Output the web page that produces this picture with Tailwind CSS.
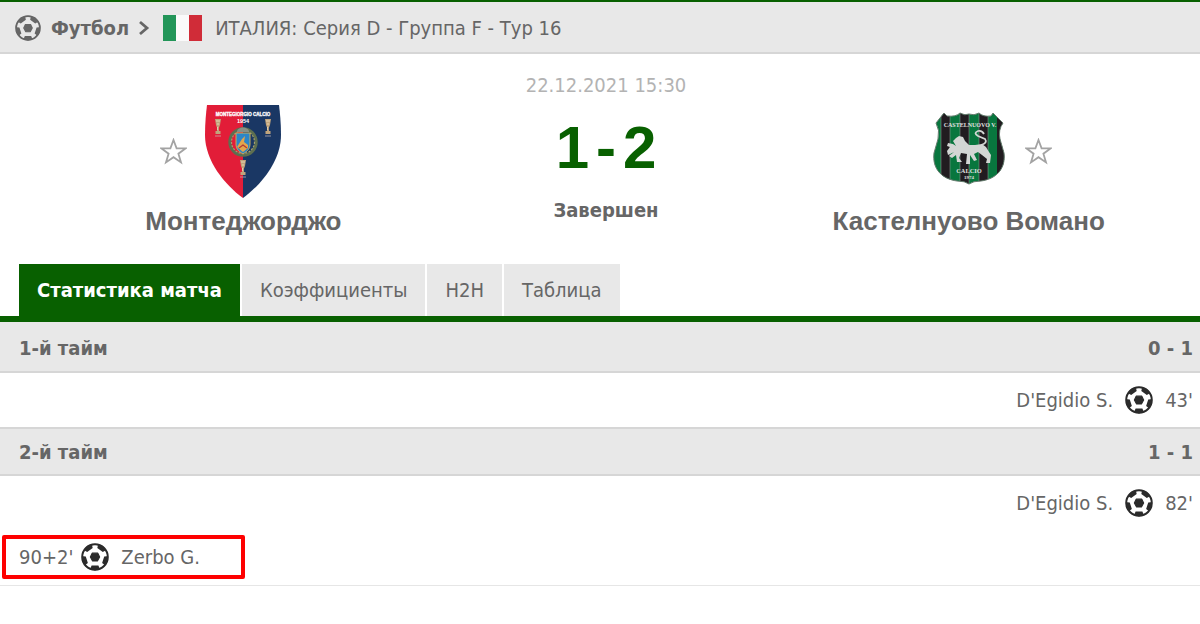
<!DOCTYPE html>
<html lang="ru">
<head>
<meta charset="utf-8">
<meta name="viewport" content="width=device-width, initial-scale=1">
<title>Монтеджорджо - Кастелнуово Вомано</title>
<script src="https://cdn.jsdelivr.net/npm/@tailwindcss/browser@4"></script>
</head>
<body class="bg-white font-['DejaVu_Sans_Condensed','DejaVu_Sans',sans-serif] text-[20px] leading-6 text-[#666]">
<svg class="hidden" aria-hidden="true">
  <symbol id="ball" viewBox="-14 -14 28 28">
    <circle r="12.8" fill="none" stroke="currentColor" stroke-width="2"/>
    <path d="M-2.8-3.8H2.8L4.6 0 2.4 4H-2.4L-4.6 0Z" fill="currentColor" stroke="currentColor" stroke-width="1.2" stroke-linejoin="round"/>
    <g fill="currentColor">
      <path id="patch" d="M-3.4 8.6H3.4L4.4 11 7.6 11 0 13.6-7.6 11-4.4 11Z"/>
      <use href="#patch" transform="rotate(72)"/>
      <use href="#patch" transform="rotate(144)"/>
      <use href="#patch" transform="rotate(216)"/>
      <use href="#patch" transform="rotate(288)"/>
    </g>
  </symbol>
  <symbol id="star" viewBox="0 0 27 27">
    <path d="M13.5 2 16.6 10.4H25.5L18.4 15.7 21 24.4 13.5 19.2 6 24.4 8.6 15.7 1.5 10.4H10.4Z" fill="none" stroke="#a3a3a3" stroke-width="1.8"/>
  </symbol>
  <symbol id="cup" viewBox="0 0 8 18">
    <path d="M1 0H7L6 6 4.8 9 5 12H6.5V15H1.5V12H3L3.2 9 2 6Z" fill="#c0a47c"/>
    <path d="M2 2H6M3 5H5M3.6 8V11" stroke="#efe0c0" stroke-width=".8"/>
    <path d="M1 17H7" stroke="#cbb" stroke-width=".7"/>
  </symbol>
</svg>

<header class="flex items-center border-t-2 border-b-2 border-t-[#086000] border-b-[#d6d6d6] bg-[#e8e8e8] pt-[13px] pb-[11px] pl-[15px]">
  <svg class="size-[26px]"><use href="#ball"/></svg>
  <a href="#" class="ml-[10px] font-bold">Футбол</a>
  <svg class="ml-[10px] h-4 w-3" viewBox="0 0 12 16" fill="none" stroke="#666" stroke-width="2.8"><path d="M1 2 8 8 1 14"/></svg>
  <svg class="ml-3 h-[26px] w-[39px]" viewBox="0 0 39 26"><path fill="#229558" d="M0 0h13v26H0z"/><path fill="#fafafa" d="M13 0h13v26H13z"/><path fill="#d02c38" d="M26 0h13v26H26z"/></svg>
  <a href="#" class="ml-[13px]">ИТАЛИЯ: Серия D - Группа F - Тур 16</a>
</header>

<main>
  <section class="grid grid-cols-3 pt-[19px] pr-[50px] pb-[27px] pl-[62px] text-center">
    <div class="flex flex-col items-center pt-8">
      <div class="flex w-full items-center justify-center gap-[18px]">
        <button type="button" aria-label="В избранное"><svg class="size-[27px]"><use href="#star"/></svg></button>
        <svg class="h-[93px] w-[76px]" viewBox="0 0 76 93">
          <path d="M2 0H38V93C20 80 0 56 0 30 0 18 1 8 2 0Z" fill="#e21d38"/>
          <path d="M38 0H74C75 8 76 18 76 30 76 56 56 80 38 93Z" fill="#1a3764"/>
          <text x="38" y="10.5" text-anchor="middle" font-family="Liberation Sans" font-weight="bold" font-size="4.5" fill="#fff" stroke="#fff" stroke-width=".3">MONTEGIORGIO CALCIO</text>
          <text x="38" y="18" text-anchor="middle" font-family="Liberation Sans" font-weight="bold" font-size="5.5" fill="#fff">1954</text>
          <use href="#cup" x="9" y="14" width="8" height="18"/>
          <use href="#cup" x="59" y="14" width="8" height="18"/>
          <use href="#cup" x="34" y="55" width="8" height="18"/>
          <circle cx="38" cy="37" r="13.2" fill="none" stroke="#5d6f50" stroke-width="3"/>
          <circle cx="38" cy="37" r="11.5" fill="none" stroke="#a5a071" stroke-width="1.2" stroke-dasharray="2 1.4"/>
          <path d="M32 27C32 21 44 21 44 27Z" fill="#879087"/>
          <path d="M31 28H45V39C45 45 41 47 38 49 35 47 31 45 31 39Z" fill="#2c86c8" stroke="#c9ad58" stroke-width="1"/>
          <path d="M32 42 37 34 40 31 39 37 43 40 43 43 38 47Z" fill="#e2a64d"/>
          <path d="M34 43 38 40 42 43" fill="none" stroke="#b33a32" stroke-width="1.3"/>
        </svg>
        <span class="size-[27px]"></span>
      </div>
      <h2 class="mt-[7px] font-['Liberation_Sans',sans-serif] text-[26px] leading-8 font-bold">Монтеджорджо</h2>
    </div>
    <div>
      <p class="text-[#b3b3b3]">22.12.2021 15:30</p>
      <p class="mt-[17px] flex justify-center gap-[7px] font-['Liberation_Sans',sans-serif] text-[60px] leading-[68px] font-bold text-[#086000]"><span>1</span><span>-</span><span>2</span></p>
      <p class="mt-4 font-bold">Завершен</p>
    </div>
    <div class="flex flex-col items-center pt-8">
      <div class="flex w-full items-center justify-center gap-[18px]">
        <span class="size-[27px]"></span>
        <svg class="h-[93px] w-[76px]" viewBox="0 0 76 93">
          <defs><clipPath id="shield"><path d="M13 8 16 11Q25 12 29 8 34 11 38 9 43 11 48 8 52 12 60 11L62 8 72 18Q67 25 69 34L73 48C75 64 65 74 50 76Q42 76 38 79 34 76 26 76C11 74 1 64 3 48L7 34Q9 25 5 18Z"/></clipPath></defs>
          <g clip-path="url(#shield)">
            <path d="M0 0H76V93H0Z" fill="#08763e"/>
            <path d="M10 0h9v93h-9zM29 0h9v93h-9zM48 0h9v93h-9zM66 0h10v93H66z" fill="#211c20"/>
            <path d="M10 0v93M19 0v93M29 0v93M38 0v93M48 0v93M57 0v93" stroke="#9ba69f" stroke-width=".5"/>
          </g>
          <path d="M13 8 16 11Q25 12 29 8 34 11 38 9 43 11 48 8 52 12 60 11L62 8 72 18Q67 25 69 34L73 48C75 64 65 74 50 76Q42 76 38 79 34 76 26 76C11 74 1 64 3 48L7 34Q9 25 5 18Z" fill="none" stroke="#667b6e" stroke-width="1"/>
          <path d="M25 33 28 31 32 32 34 36 38 40H44L51 39 55 42 58 47 60 50 59 58H55L56 54 51 50 47 47 43 49 46 55 43 56 39 50 39 59H35L36 49 30 48 28 53 31 57 26 57 25 50 21 53 18 51 23 47 17 50 16 46 19 42 16 41 17 38 22 39 25 41 22 36Z" fill="#d3d6d4"/>
          <path d="M50 40Q57 38 54 34L47 31Q42 28 47 26 51 25 53 29" fill="none" stroke="#d3d6d4" stroke-width="1.8"/>
          <text x="39" y="22" text-anchor="middle" font-family="Liberation Serif" font-weight="bold" font-size="6" fill="#e0e0e0">CASTELNUOVO V.</text>
          <text x="38" y="68" text-anchor="middle" font-family="Liberation Serif" font-weight="bold" font-size="6.4" fill="#e0e0e0">CALCIO</text>
          <text x="38" y="74" text-anchor="middle" font-family="Liberation Serif" font-weight="bold" font-size="5" fill="#e0e0e0">1974</text>
        </svg>
        <button type="button" aria-label="В избранное"><svg class="size-[27px]"><use href="#star"/></svg></button>
      </div>
      <h2 class="mt-[7px] font-['Liberation_Sans',sans-serif] text-[26px] leading-8 font-bold">Кастелнуово Вомано</h2>
    </div>
  </section>

  <nav class="flex gap-[2px] border-b-[6px] border-[#086000] pl-[19px]">
    <a href="#" class="bg-[#086000] px-[18px] py-[14px] font-bold text-white">Статистика матча</a>
    <a href="#" class="bg-[#e8e8e8] px-[18px] py-[14px]">Коэффициенты</a>
    <a href="#" class="bg-[#e8e8e8] px-[18px] py-[14px]">H2H</a>
    <a href="#" class="bg-[#e8e8e8] px-[18px] py-[14px]">Таблица</a>
  </nav>

  <section>
    <h3 class="flex justify-between border-b-2 border-[#d6d6d6] bg-[#e8e8e8] pt-[14px] pr-[7px] pb-[11px] pl-[19px] font-bold"><span>1-й тайм</span><span>0 - 1</span></h3>
    <div class="flex items-center justify-end py-[13px] pr-[7px]">
      <a href="#">D'Egidio S.</a><svg class="mx-3 size-7 text-[#2b2b2b]"><use href="#ball"/></svg><span>43'</span>
    </div>
    <h3 class="flex justify-between border-y-2 border-[#d6d6d6] bg-[#e8e8e8] pt-[11px] pr-[7px] pb-[10px] pl-[19px] font-bold"><span>2-й тайм</span><span>1 - 1</span></h3>
    <div class="flex items-center justify-end py-[13px] pr-[7px]">
      <a href="#">D'Egidio S.</a><svg class="mx-3 size-7 text-[#2b2b2b]"><use href="#ball"/></svg><span>82'</span>
    </div>
    <div class="border-b border-[#e6e6e6] pt-[5px] pb-[6px] pl-[2px]">
      <div class="flex w-[243px] items-center rounded-xs border-4 border-[#fe0000] py-1 pl-[13px]">
        <span>90+2'</span><svg class="mr-3 ml-2 size-7 text-[#2b2b2b]"><use href="#ball"/></svg><a href="#">Zerbo G.</a>
      </div>
    </div>
  </section>
</main>
</body>
</html>
